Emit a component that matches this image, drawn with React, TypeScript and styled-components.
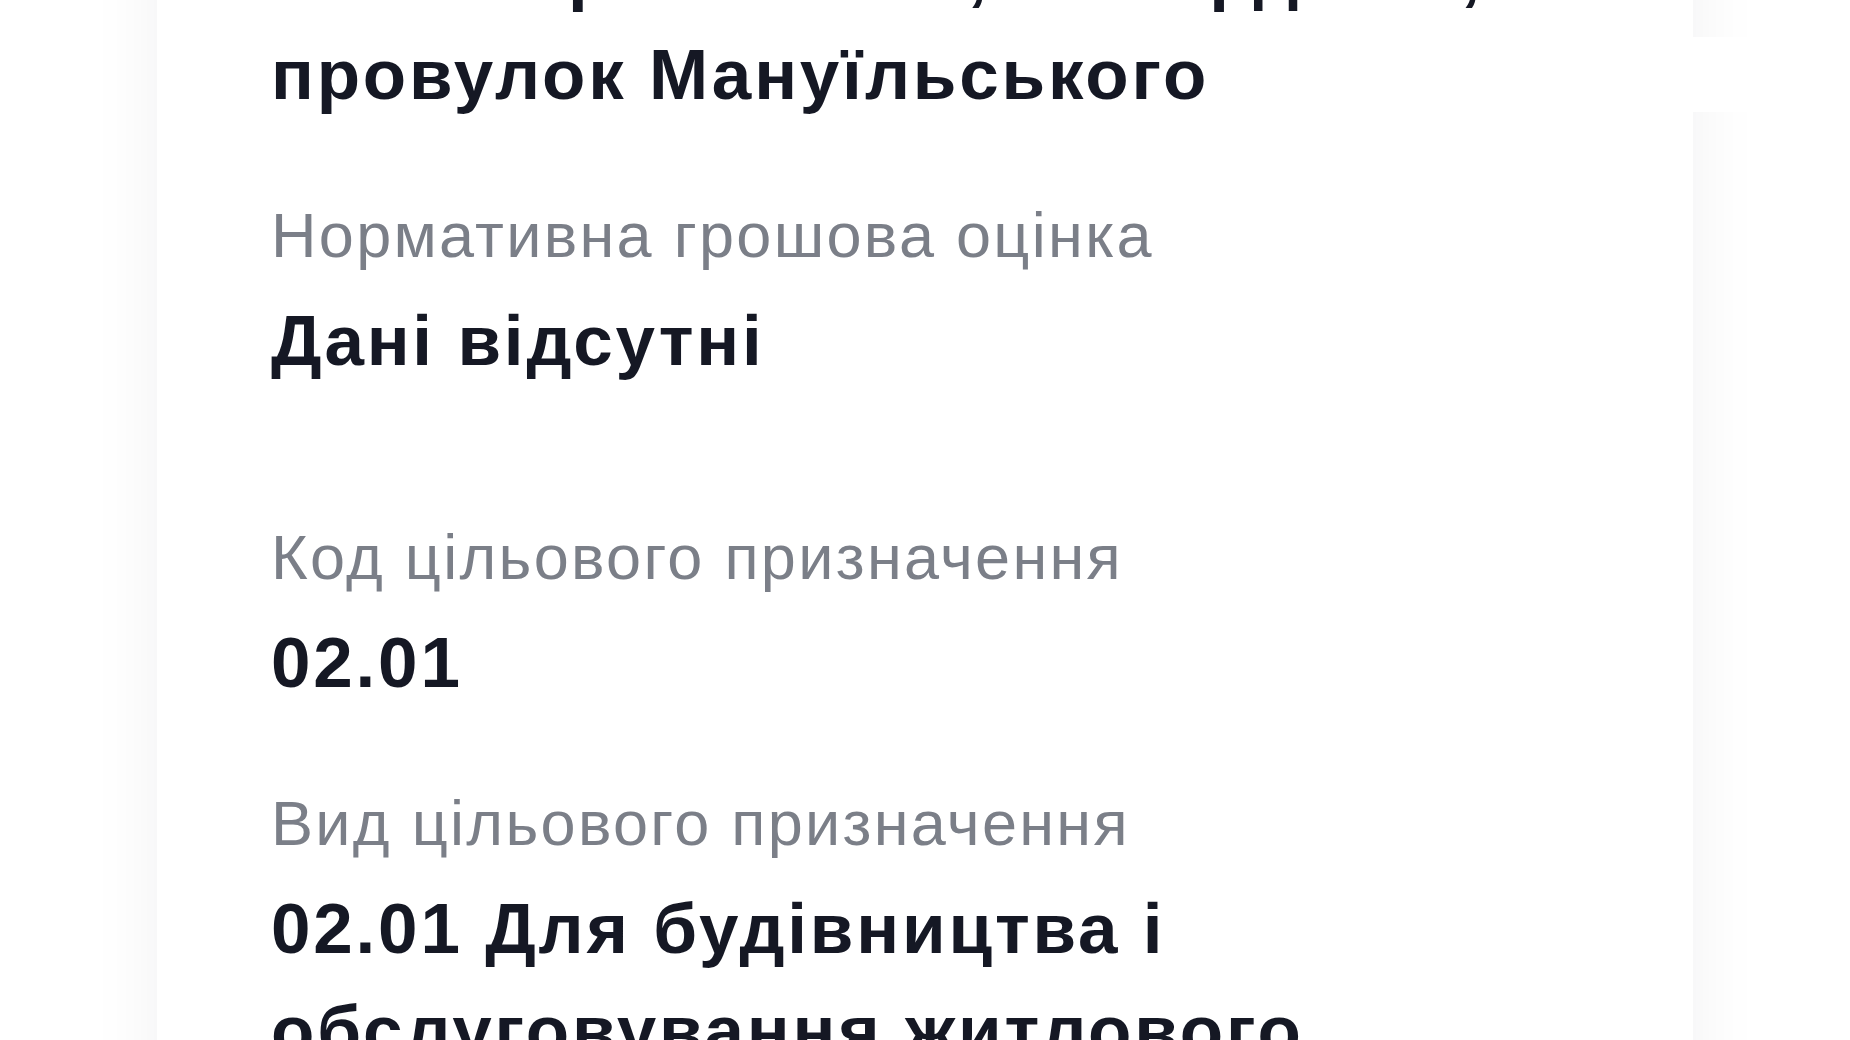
import React from "react";
import styled, { createGlobalStyle } from "styled-components";

const GlobalStyle = createGlobalStyle`
  html, body {
    margin: 0;
    padding: 0;
    background: #ffffff;
    overflow: hidden;
  }
  body {
    font-family: "Liberation Sans", Arial, Helvetica, sans-serif;
    -webkit-font-smoothing: antialiased;
  }
`;

/* The page is shown scrolled: the card starts above the visible area. */
const Page = styled.main`
  display: flex;
  justify-content: center;
  margin-top: -218px;
`;

const Card = styled.section`
  position: relative;
  width: 1536px;
  box-sizing: border-box;
  padding: 40px 114px 80px;
  background: #ffffff;
  box-shadow: 0 0 64px 6px rgba(20, 24, 36, 0.05);
  display: flex;
  flex-direction: column;
`;

/* Small white tab that sits over the card's right shadow. */
const SideTab = styled.div`
  position: absolute;
  left: 100%;
  top: 255px;
  width: 67px;
  height: 75px;
  background: #ffffff;
`;

const Field = styled.div<{ $gap: number }>`
  display: flex;
  flex-direction: column;
  gap: 10px;
  margin-bottom: ${(p) => p.$gap}px;
`;

const Label = styled.div`
  font-size: 63px;
  line-height: 90px;
  font-weight: 400;
  letter-spacing: 2.3px;
  color: #7b7f88;
  white-space: nowrap;
`;

const Value = styled.div`
  font-size: 71px;
  line-height: 102px;
  font-weight: 700;
  letter-spacing: 2.8px;
  color: #151824;
`;

const ValueLine = styled.span`
  display: block;
  white-space: nowrap;
`;

type Item = { label: string; value: string | string[]; gap: number };

const items: Item[] = [
  {
    label: "Адреса",
    value: ["Житомирська обл., м. Бердичів,", "провулок Мануїльського"],
    gap: 64,
  },
  { label: "Нормативна грошова оцінка", value: "Дані відсутні", gap: 120 },
  { label: "Код цільового призначення", value: "02.01", gap: 64 },
  {
    label: "Вид цільового призначення",
    value:
      "02.01 Для будівництва і обслуговування житлового будинку, господарських будівель і споруд (присадибна ділянка)",
    gap: 64,
  },
];

export default function App() {
  return (
    <>
      <GlobalStyle />
      <Page>
        <Card>
          <SideTab />
          {items.map((it) => (
            <Field key={it.label} $gap={it.gap}>
              <Label>{it.label}</Label>
              <Value>
                {Array.isArray(it.value)
                  ? it.value.map((line) => <ValueLine key={line}>{line}</ValueLine>)
                  : it.value}
              </Value>
            </Field>
          ))}
        </Card>
      </Page>
    </>
  );
}
